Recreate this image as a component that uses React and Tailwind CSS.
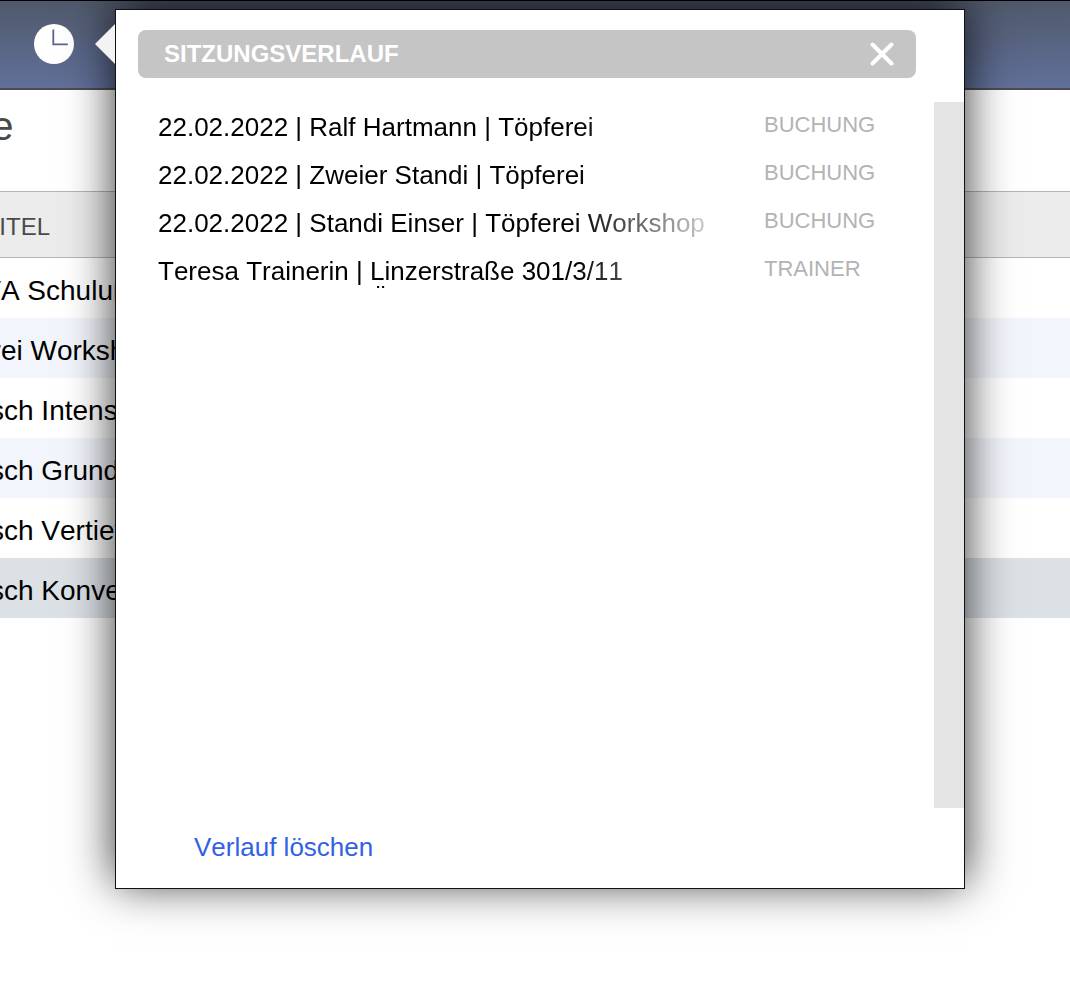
import React, { useState } from 'react';

const courses = [
  { id: 1, title: 'NUOVA Schulung', bg: 'bg-white' },
  { id: 2, title: 'Töpferei Workshop', bg: 'bg-[#f2f5fb]' },
  { id: 3, title: 'Russisch Intensiv', bg: 'bg-white' },
  { id: 4, title: 'Russisch Grundkurs', bg: 'bg-[#f2f5fb]' },
  { id: 5, title: 'Russisch Vertiefung', bg: 'bg-white' },
  { id: 6, title: 'Russisch Konversation', bg: 'bg-[#dce1e6]' },
];

const entries = [
  { id: 1, text: '22.02.2022 | Ralf Hartmann | Töpferei', type: 'BUCHUNG' },
  { id: 2, text: '22.02.2022 | Zweier Standi | Töpferei', type: 'BUCHUNG' },
  { id: 3, text: '22.02.2022 | Standi Einser | Töpferei Workshop', type: 'BUCHUNG' },
  { id: 4, text: 'Teresa Trainerin | Linzerstraße 301/3/11\n1140 Wien, Wien, Österreich', type: 'TRAINER' },
];

function ClockIcon() {
  return (
    <svg viewBox="0 0 40 40" className="block size-10" aria-hidden="true">
      <circle cx="20" cy="20" r="20" fill="#fff" />
      <path d="M19.3 5.5V20.3H33.8" fill="none" stroke="#56658a" strokeWidth="1.8" />
    </svg>
  );
}

function CloseIcon() {
  return (
    <svg viewBox="0 0 24 24" className="block size-6" aria-hidden="true">
      <path d="M2.5 2.5L21.5 21.5M21.5 2.5L2.5 21.5" fill="none" stroke="#fff" strokeWidth="4" strokeLinecap="round" />
    </svg>
  );
}

function HistoryPopover({ items, onClear, onClose }) {
  return (
    <div role="dialog" aria-labelledby="history-title" className="absolute left-[115px] top-[9px] w-[850px] border border-[#111] bg-white shadow-[0_-6px_44px_rgba(0,0,0,0.8)]">
      <svg viewBox="0 0 20 40" className="absolute right-full top-[14px] mr-px h-10 w-5" aria-hidden="true">
        <path d="M20 0V40L0 20Z" fill="#f3f3f3" />
      </svg>
      <div className="ml-[22px] mr-12 mt-5 flex h-12 items-center justify-between rounded-lg bg-[#c5c5c5] pl-[26px] pr-[22px]">
        <h2 id="history-title" className="text-[24px] font-bold leading-8 text-white">SITZUNGSVERLAUF</h2>
        <button type="button" aria-label="Schließen" onClick={onClose} className="cursor-pointer"><CloseIcon /></button>
      </div>
      <div className="mt-6 flex h-[706px]">
        <ul className="flex-1 pl-[42px]">
          {items.map(i => (
            <li key={i.id} className="flex h-12 items-start">
              <p className="h-[42px] w-[580px] overflow-hidden whitespace-pre-line pt-[11px] text-[26px] leading-7 text-black [mask-image:linear-gradient(to_right,black_72%,transparent)]">{i.text}</p>
              <span className="ml-[26px] pt-[11px] text-[22px] leading-6 text-[#b3b3b3]">{i.type}</span>
            </li>
          ))}
        </ul>
        <div className="w-[30px] bg-[#e5e5e5]"></div>
      </div>
      <div className="flex h-20 items-center pb-0.5 pl-[78px]">
        <button type="button" onClick={onClear} className="cursor-pointer text-[26px] leading-8 text-[#3262e3]">Verlauf löschen</button>
      </div>
    </div>
  );
}

export default function App() {
  const [open, setOpen] = useState(true);
  const [items, setItems] = useState(entries);

  return (
    <div className="relative min-h-screen overflow-hidden bg-white font-['Liberation_Sans',Arial,sans-serif] [font-kerning:none]">
      <header className="flex h-[90px] items-center border-b-2 border-t border-b-[#4b4b52] border-t-black bg-linear-to-b from-[#50596b] to-[#61709a] pb-0.5 pl-[34px]">
        <button type="button" aria-label="Sitzungsverlauf" onClick={() => setOpen(!open)} className="cursor-pointer"><ClockIcon /></button>
      </header>

      <main>
        <h1 className="-ml-[91px] h-[101px] pt-[14px] text-[40px] leading-[44px] text-[#4a4a4a]">Kurse</h1>
        <table className="w-full border-collapse text-left">
          <thead>
            <tr className="h-[66px] border-y border-[#b5b5b5] bg-[#ececec]">
              <th className="p-0 pt-1 font-normal"><span className="-ml-[82px] block text-[24px] leading-8 text-[#4a4a4a]">KURSTITEL</span></th>
            </tr>
          </thead>
          <tbody>
            {courses.map(c => (
              <tr key={c.id} className={`h-[60px] ${c.bg}`}>
                <td className="p-0 pt-1.5"><span className="-ml-[80px] block text-[28px] leading-8 text-black">{c.title}</span></td>
              </tr>
            ))}
          </tbody>
        </table>
      </main>

      {open && <HistoryPopover items={items} onClear={() => setItems([])} onClose={() => setOpen(false)} />}
    </div>
  );
}
